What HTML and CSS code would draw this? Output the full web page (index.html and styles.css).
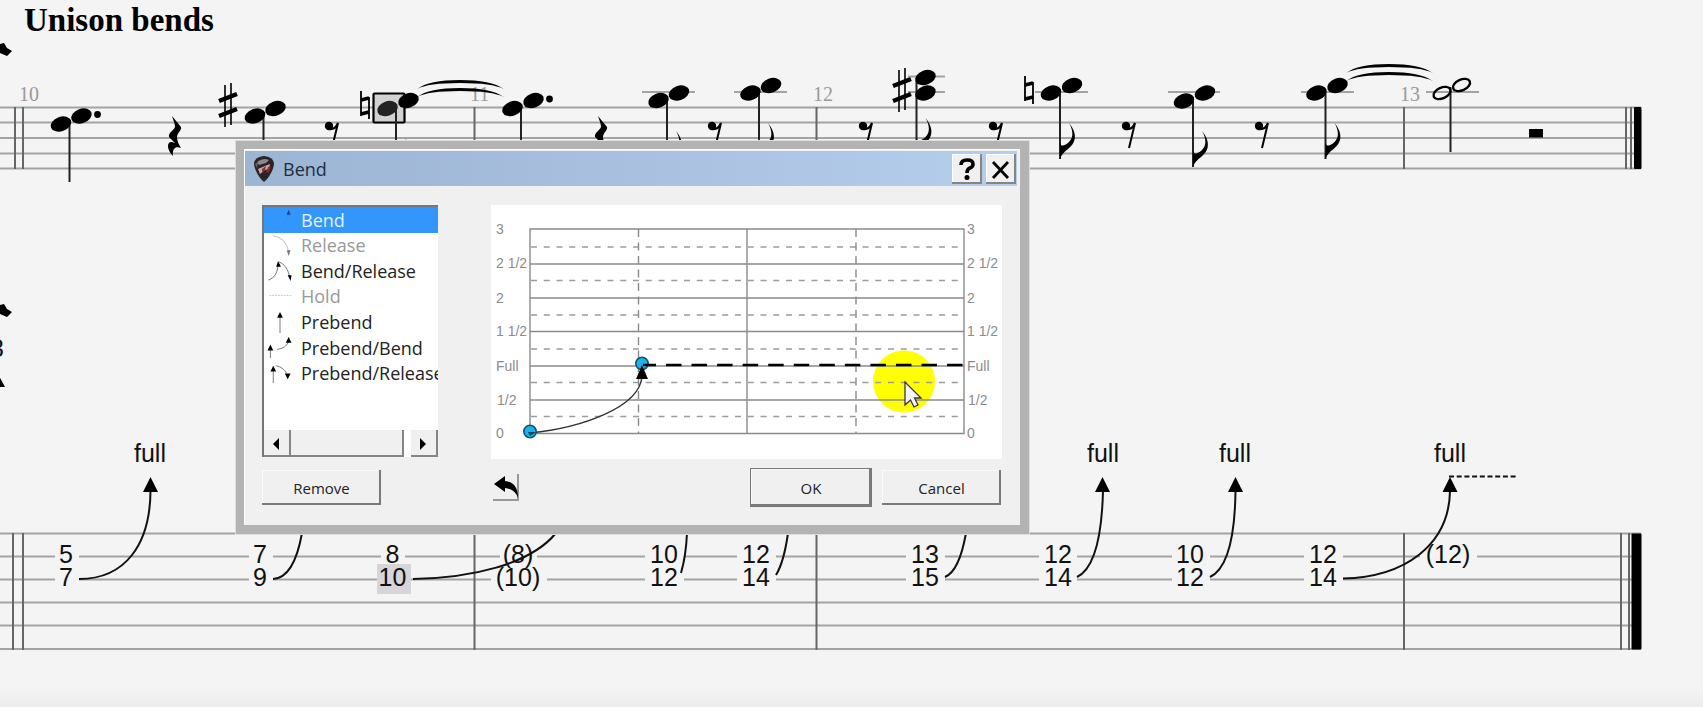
FILE: index.html
```html
<!DOCTYPE html>
<html lang="en">
<head>
<meta charset="utf-8">
<title>Unison bends</title>
<link rel="stylesheet" href="styles.css">
</head>
<body>
<main class="page">
<h1 class="section-title">Unison bends</h1>
<svg class="score" viewBox="0 40 1703 667" role="img" aria-label="Notation and tablature, bars 10 to 13">
  <defs>
    <ellipse id="head" rx="10.600" ry="7.200" transform="rotate(-20)"/>
    <ellipse id="open" rx="9" ry="5.400" transform="rotate(-24)" fill="none" stroke="#000" stroke-width="2.400"/>
    <path id="quarter" d="M4 0 13 11C14 14 9 17 9 21C9 25 11 29 13 32C8 30 4 32 5 40C-2 33-1 25 4 26L7 27 1 21C0 17 6 14 7 11C7 7 5 4 4 0Z"/>
    <g id="eighth"><circle cx="4" cy="5" r="4.200"/><path d="M4 8Q10 9 13 2L7 27" fill="none" stroke="#000" stroke-width="2"/></g>
    <g id="sharp" stroke="#000"><path d="M6 2V44M12 0V42" stroke-width="1.600"/><path d="M0 18 18 11M0 33 18 26" stroke-width="4.400"/></g>
    <g id="natural" stroke="#000" fill="none"><path d="M1 0V25M9 6V28" stroke-width="1.800"/><path d="M1 9 9 7M1 23 9 21" stroke-width="3.400"/></g>
    <path id="flag" d="M9-36C18-25 16-16 8-10C4-7 1-4 0 0V-16C1-12 5-13 9-17C14-22 13-29 9-36Z"/>
    <path id="tie" d="M0 8Q12-1 43-1T87 8Q75 2 43 2T0 8Z"/>
    <path id="tip" d="M0 0 7.500 15H-7.500Z"/>
  </defs>

  <g class="staff">
    <path d="M0 107.500H1641M0 122.500H1641M0 138H1641M0 153.500H1641M0 168.500H1641"/>
    <path d="M642 92H695M734 92H787M908 76.500H945M908 92H945M1035 92H1088M1168 92H1220M1301 92H1354M1426 92H1479"/>
    <path d="M0 533.500H1641M0 556.500H1641M0 579.500H1641M0 602.500H1641M0 625.500H1641M0 649H1641"/>
  </g>
  <g class="bars">
    <path d="M15 107V169M23 107V169M474.500 107V169M816.500 107V169M1404 107V169M1626 107V169M1631 107V169"/>
    <path d="M13 533V650M23 533V650M474.500 533V650M816.500 533V650M1404 533V650M1621 533V650M1629 533V650"/>
  </g>
  <rect x="1634" y="107" width="7.500" height="62" rx="1"/>
  <rect x="1631.500" y="533.500" width="10" height="116" rx="1"/>

  <g class="bar-number">
    <text x="19" y="101">10</text><text x="470" y="101">11</text><text x="813" y="101">12</text><text x="1400" y="101">13</text>
  </g>

  <rect x="373.500" y="93.500" width="31" height="29" rx="1" fill="#d2d2d2" stroke="#000" stroke-width="2.200"/>
  <g class="stems">
    <path d="M69.500 123V182M263.500 116V175M396 108V175M521 108V170M667 101V167M759 93V159M916.500 78V154M1060 93V159M1193 101V167M1325.500 93V159M1450.500 87V152"/>
  </g>
  <g>
    <use href="#head" x="61" y="124"/><use href="#head" x="81.500" y="116"/><circle cx="97.500" cy="114.500" r="3.400"/>
    <use href="#head" x="255" y="116"/><use href="#head" x="275.500" y="108.500"/>
    <use href="#head" x="387.500" y="108.500" fill="#222"/><use href="#head" x="408.500" y="100.500"/>
    <use href="#head" x="512.500" y="108.500"/><use href="#head" x="533.500" y="100.500"/><circle cx="549.500" cy="99" r="3.400"/>
    <use href="#head" x="658.500" y="100.500"/><use href="#head" x="679" y="93"/>
    <use href="#head" x="750.500" y="93"/><use href="#head" x="771" y="85.500"/>
    <use href="#head" x="925.500" y="77.500"/><use href="#head" x="925.500" y="93"/>
    <use href="#head" x="1051" y="93"/><use href="#head" x="1072" y="85.500"/>
    <use href="#head" x="1184" y="101"/><use href="#head" x="1205" y="93"/>
    <use href="#head" x="1316.500" y="93"/><use href="#head" x="1337.500" y="85.500"/>
    <use href="#open" x="1442" y="93"/><use href="#open" x="1461.500" y="85"/>
    <use href="#sharp" x="219" y="83"/><use href="#sharp" x="893" y="68"/>
    <use href="#natural" x="360" y="91"/><use href="#natural" x="1024" y="76"/>
    <use href="#quarter" x="168" y="116"/><use href="#quarter" x="594" y="116"/>
    <use href="#eighth" x="325" y="121"/><use href="#eighth" x="708" y="121"/><use href="#eighth" x="859" y="121"/><use href="#eighth" x="989" y="121"/><use href="#eighth" x="1122" y="121"/><use href="#eighth" x="1255" y="121"/>
    <use href="#flag" x="396" y="174"/><use href="#flag" x="667" y="167"/><use href="#flag" x="759" y="159"/><use href="#flag" x="916.500" y="154"/><use href="#flag" x="1060" y="159"/><use href="#flag" x="1193" y="167"/><use href="#flag" x="1325.500" y="159"/>
    <use href="#tie" x="417" y="81"/><use href="#tie" x="417" y="89"/><use href="#tie" x="1346" y="65"/><use href="#tie" x="1346" y="73"/>
    <rect x="1529" y="129" width="14" height="8.500"/>
    <path d="M0 44 4 43 7 48 12 51 7 56 0 53ZM0 305 4 304 7 309 12 312 7 317 0 314ZM-3 372 5 387H-11Z"/>
  </g>

  <g class="mask">
    <rect x="55" y="545" width="24" height="46"/><rect x="249" y="545" width="24" height="46"/><rect x="381" y="545" width="24" height="22"/>
    <rect x="500" y="545" width="37" height="22"/><rect x="491" y="568" width="56" height="23"/>
    <rect x="645" y="545" width="39" height="46"/><rect x="737" y="545" width="39" height="46"/><rect x="906" y="545" width="39" height="46"/>
    <rect x="1039" y="545" width="38" height="46"/><rect x="1172" y="545" width="38" height="46"/><rect x="1304" y="545" width="39" height="46"/><rect x="1420" y="545" width="57" height="23"/>
  </g>
  <rect x="377" y="564" width="34" height="30" fill="#d7d5da"/>
  <g class="bends">
    <path d="M79 579C125 579 150 545 150.500 491M273 579C292 578 299 550 302 533M413 579C470 578 530 565 556 533M681 573Q686 556 687 533M776 575Q784 562 788 533M945 577C957 572 963 550 966 533M1077 577C1096 568 1102 530 1103 491M1210 577C1229 568 1235 530 1235.500 491M1343 578.500C1405 577 1449 545 1450 491"/>
    <path d="M1449 476.500H1516" stroke-dasharray="5 2.700"/>
  </g>
  <use href="#tip" x="150.500" y="477"/><use href="#tip" x="1102.500" y="477"/><use href="#tip" x="1235.500" y="477"/><use href="#tip" x="1450" y="477"/>
  <g class="tab">
    <text x="66" y="563">5</text><text x="66" y="586">7</text>
    <text x="260" y="563">7</text><text x="260" y="586">9</text>
    <text x="392.500" y="563">8</text><text x="392.500" y="586">10</text>
    <text x="518" y="563">(8)</text><text x="518" y="586">(10)</text>
    <text x="664" y="563">10</text><text x="664" y="586">12</text>
    <text x="756" y="563">12</text><text x="756" y="586">14</text>
    <text x="925" y="563">13</text><text x="925" y="586">15</text>
    <text x="1058" y="563">12</text><text x="1058" y="586">14</text>
    <text x="1190" y="563">10</text><text x="1190" y="586">12</text>
    <text x="1323" y="563">12</text><text x="1323" y="586">14</text>
    <text x="1448" y="563">(12)</text>
    <text x="150" y="462">full</text><text x="1103" y="462">full</text><text x="1235" y="462">full</text><text x="1450" y="462">full</text>
    <text x="-3" y="357">3</text>
  </g>
</svg>

<section class="dialog" role="dialog" aria-labelledby="dialog-title">
  <header class="titlebar">
    <svg class="pick" viewBox="0 0 22 26" aria-hidden="true">
      <path d="M1 7Q2 1 11 0Q20 1 21 7C21 14 15 23 11 26C7 23 1 14 1 7Z" fill="#2b2427"/>
      <path d="M4 6Q10 1 16 4L13 7 6 9Z" fill="#8d8689"/>
      <path d="M5 13 12 10 17 8 16 13 12 14 7 18Z" fill="#c9a9a8"/>
      <path d="M9 13 13 10 12 14 9 16ZM15 11 18 10 16 16 13 17Z" fill="#98252c"/>
      <path d="M2 8 5 6 4 12Z" fill="#6b6468"/>
    </svg>
    <h2 class="dialog-title" id="dialog-title">Bend</h2>
    <button class="caption-button" type="button" aria-label="Help"><svg viewBox="0 0 30 30"><path d="M9 11Q9 6 15 6Q21 6 21 10Q21 13 18 14Q15 15 15 19" fill="none" stroke="#000" stroke-width="3.600"/><circle cx="15" cy="23.500" r="2.500"/></svg></button>
    <button class="caption-button" type="button" aria-label="Close"><svg viewBox="0 0 30 30"><path d="M7 8 22 24M22 8 7 24" stroke="#000" stroke-width="2.800"/></svg></button>
  </header>
  <div class="dialog-body">
    <div class="side">
      <div class="listbox">
        <div class="options" role="listbox" aria-label="Bend type">
          <button class="option selected" type="button" role="option" aria-selected="true"><svg viewBox="0 0 32 26"><path d="M23 8 25 3 27 8Z" fill="#15426f"/><path d="M25 8Q24 17 10 23" stroke="#3491ee"/></svg>Bend</button>
          <button class="option" type="button" role="option" disabled><svg viewBox="0 0 32 26"><path d="M9 3Q22 5 25 19" stroke="#bbb"/><path d="M23 18H27L25 24Z" fill="#777"/></svg>Release</button>
          <button class="option" type="button" role="option"><svg viewBox="0 0 32 26"><path d="M4 23Q13 20 14 8M15 4Q23 7 26 19" stroke="#777"/><path d="M12 9 14 3 17 9ZM24 18H28L27 24Z"/></svg>Bend/Release</button>
          <button class="option" type="button" role="option" disabled><svg viewBox="0 0 32 26"><path d="M5 12H29" stroke="#ccc" stroke-dasharray="2 1"/></svg>Hold</button>
          <button class="option" type="button" role="option"><svg viewBox="0 0 32 26"><path d="M16 8V24" stroke="#777"/><path d="M13 8 16 2 19 8Z"/></svg>Prebend</button>
          <button class="option" type="button" role="option"><svg viewBox="0 0 32 26"><path d="M6 14V24M13 15Q22 14 25 7" stroke="#777"/><path d="M3 16 6 10 9 16ZM22 8 25 2 28 8Z"/></svg>Prebend/Bend</button>
          <button class="option" type="button" role="option"><svg viewBox="0 0 32 26"><path d="M9 10V23M12 5Q19 6 23 13" stroke="#777"/><path d="M6 11 9 5 12 11ZM21 13H27L24 19Z"/></svg>Prebend/Release</button>
        </div>
        <div class="scrollbar">
          <button class="scroll-arrow" type="button" aria-label="Scroll left"><svg viewBox="0 0 8 12"><path d="M7 0V12L1 6Z"/></svg></button>
          <span class="thumb"></span>
          <button class="scroll-arrow" type="button" aria-label="Scroll right"><svg viewBox="0 0 8 12"><path d="M1 0V12L7 6Z"/></svg></button>
        </div>
      </div>
      <button class="button" type="button">Remove</button>
    </div>
    <div class="editor">
      <svg class="graph" viewBox="491 205 511 254" role="img" aria-label="Bend curve">
        <circle cx="904" cy="381.500" r="31" fill="#ff0"/>
        <g fill="none" stroke="#8a8a8c" stroke-width="1.400">
          <path d="M530 229H964V433.500H530ZM530 264H964M530 298H964M530 331.500H964M530 366H964M530 400H964M747 229V433"/>
          <path d="M531 247H960M531 280.500H960M531 315H960M531 349H960M531 382.500H960M531 416.500H960" stroke="#9c9c9e" stroke-dasharray="6 6.750"/>
          <path d="M638.500 229V433M856 229V433" stroke-dasharray="8 5.500"/>
        </g>
        <g class="axis">
          <text x="496" y="234">3</text><text x="496" y="268">2 1/2</text><text x="496" y="303">2</text><text x="496" y="336">1 1/2</text><text x="496" y="371">Full</text><text x="497" y="405">1/2</text><text x="496" y="438">0</text>
          <text x="967" y="234">3</text><text x="967" y="268">2 1/2</text><text x="967" y="303">2</text><text x="967" y="336">1 1/2</text><text x="967" y="371">Full</text><text x="968" y="405">1/2</text><text x="967" y="438">0</text>
        </g>
        <path d="M530 433C580 428 640 408 642 376" fill="none" stroke="#333" stroke-width="1.400"/>
        <circle cx="530" cy="431.500" r="6.200" fill="#19b4ea" stroke="#17536f" stroke-width="1.600"/>
        <path d="M528 432H536L530 436Z" fill="#0b4560"/>
        <circle cx="642" cy="363.500" r="6.200" fill="#19b4ea" stroke="#17536f" stroke-width="1.600"/>
        <path d="M642 365 648 379H636Z"/>
        <path d="M643 365H656M666 365H963" stroke="#000" stroke-width="2.400" stroke-dasharray="15.500 10.050"/>
        <path d="M905 382V405L910.500 400 914 407 918 405 914.500 398H921Z" fill="#f6f4f8" stroke="#3a3050" stroke-width="1.300"/>
      </svg>
      <div class="actions">
        <button class="undo" type="button" aria-label="Undo"><svg viewBox="0 0 26 27"><path d="M1 10 12 2V7Q25 8 25 24Q22 15 12 14V18Z"/></svg></button>
        <button class="button default" type="button">OK</button>
        <button class="button" type="button">Cancel</button>
      </div>
    </div>
  </div>
</section>
</main>
</body>
</html>
```
FILE: styles.css
```css
* {
  box-sizing: border-box;
}

body {
  margin: 0;
  background: #f4f4f4;
  font-family: "Open Sans", "Noto Sans", sans-serif;
  color: #222;
}

.page {
  position: relative;
  min-height: 100vh;
  overflow: hidden;
  background: linear-gradient(to top, #ededed, #f4f4f4 22px);
}

.section-title {
  margin: 0;
  padding: 2px 24px;
  font: bold 33px/36px "Liberation Serif", serif;
  color: #000;
}

.score {
  display: block;
  width: 100%;
  height: auto;
}

.staff {
  fill: none;
  stroke: #a3a3a3;
  stroke-width: 2px;
}

.bars {
  fill: none;
  stroke: #666;
  stroke-width: 2px;
}

.stems {
  fill: none;
  stroke: #222;
  stroke-width: 2px;
}

.bends {
  fill: none;
  stroke: #111;
  stroke-width: 2px;
}

.mask {
  fill: #f4f4f4;
}

.bar-number {
  font: 20px "Liberation Serif", serif;
  fill: #999;
}

.tab {
  font: 25px "Liberation Sans", sans-serif;
  fill: #111;
  text-anchor: middle;
}

.dialog {
  position: absolute;
  top: 141px;
  left: 236px;
  width: 793px;
  border: solid #b3b3b3;
  border-width: 8px 9px 9px 8px;
  background: #f0f0f0;
  box-shadow: inset 1px 1px #fff, 0 0 0 1px #dedede, 1px 1px #888;
}

.titlebar {
  display: flex;
  align-items: center;
  gap: 4px;
  height: 35px;
  margin: 2px 3px 0 1px;
  padding: 0 1px 0 8px;
  background: linear-gradient(to right, #9bb5d2, #a9c0df 50%, #b5cfeb);
}

.pick {
  width: 22px;
  height: 26px;
}

.dialog-title {
  flex: 1;
  margin: 0;
  padding-left: 4px;
  font-size: 18px;
  font-weight: 400;
  color: #1d2c44;
}

button {
  padding: 0;
  border: 0;
  background: #f0f0f0;
  font: inherit;
  color: inherit;
}

.caption-button {
  width: 30px;
  height: 30px;
  box-shadow: inset -2px -2px #858585, inset 1px 1px #fff;
}

.caption-button svg,
.undo svg {
  display: block;
  width: 100%;
}

.dialog-body {
  display: grid;
  grid-template-columns: 176px 1fr;
  gap: 53px;
  padding: 19px 18px 18px;
}

.side {
  display: flex;
  flex-direction: column;
  align-items: flex-start;
  gap: 13px;
}

.listbox {
  display: flex;
  flex-direction: column;
  justify-content: space-between;
  width: 100%;
  height: 252px;
  overflow: hidden;
  border: solid #777;
  border-width: 2px 0 0 2px;
  background: #fff;
}

.options {
  display: grid;
  grid-template-rows: repeat(7, minmax(0, 1fr));
  height: 179px;
}

.option {
  display: flex;
  align-items: center;
  gap: 5px;
  background: none;
  font-size: 18px;
  line-height: 24px;
  white-space: nowrap;
}

.option:disabled {
  color: #999;
}

.option.selected {
  background: #3396fd;
  color: #e4f2ff;
}

.option svg {
  flex: none;
  width: 32px;
  height: 25px;
}

.option svg path[stroke] {
  fill: none;
}

.scrollbar {
  display: flex;
  height: 27px;
}

.scroll-arrow {
  width: 27px;
  padding-right: 4px;
  background: #f0f0f0;
  box-shadow: inset -2px -2px #858585;
}

.scroll-arrow svg {
  width: 8px;
  height: 12px;
}

.thumb {
  flex: 1;
  margin-right: 7px;
  background: #f0f0f0;
  box-shadow: inset -2px -2px #858585;
}

.button {
  width: 119px;
  height: 35px;
  background: #f0f0f0;
  box-shadow: inset -2px -2px #7a7a7a, inset 1px 1px #fafafa;
  font-size: 15px;
}

.button.default {
  width: 122px;
  height: 39px;
  border: 1px solid #777;
}

.graph {
  display: block;
  width: 100%;
  background: #fff;
}

.axis {
  font: 14px "Liberation Sans", sans-serif;
  fill: #8c8c8c;
}

.actions {
  display: flex;
  align-items: center;
  gap: 10px;
  padding: 9px 1px 0 2px;
}

.undo {
  width: 26px;
  height: 27px;
  margin-right: auto;
  box-shadow: inset -2px -2px #999;
}
```
